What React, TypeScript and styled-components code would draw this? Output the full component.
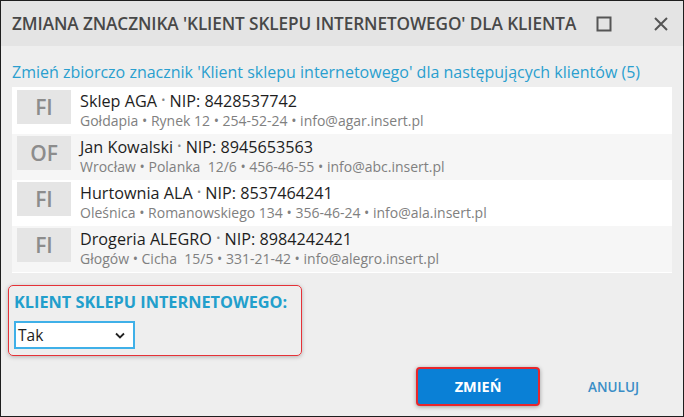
import React from "react";
import styled, { createGlobalStyle } from "styled-components";

const clients = [
  {
    badge: "FI",
    name: "Sklep AGA",
    nip: "8428537742",
    details: ["Gołdapia", "Rynek 12", "254-52-24", "info@agar.insert.pl"],
  },
  {
    badge: "OF",
    name: "Jan Kowalski",
    nip: "8945653563",
    details: ["Wrocław", "Polanka  12/6", "456-46-55", "info@abc.insert.pl"],
  },
  {
    badge: "FI",
    name: "Hurtownia ALA",
    nip: "8537464241",
    details: ["Oleśnica", "Romanowskiego 134", "356-46-24", "info@ala.insert.pl"],
  },
  {
    badge: "FI",
    name: "Drogeria ALEGRO",
    nip: "8984242421",
    details: ["Głogów", "Cicha  15/5", "331-21-42", "info@alegro.insert.pl"],
  },
];

const App = () => {
  return (
    <>
      <GlobalStyle />
      <Window>
        <TitleBar>
          <Title>ZMIANA ZNACZNIKA 'KLIENT SKLEPU INTERNETOWEGO' DLA KLIENTA</Title>
          <Controls>
            <svg width="16" height="16" viewBox="0 0 16 16">
              <rect x="1.5" y="1.5" width="13" height="13" fill="none" stroke="#555" strokeWidth="2" />
            </svg>
            <svg width="16" height="16" viewBox="0 0 16 16">
              <path d="M2 2L14 14M14 2L2 14" stroke="#555" strokeWidth="2" />
            </svg>
          </Controls>
        </TitleBar>
        <Body>
          <Subtitle>
            Zmień zbiorczo znacznik 'Klient sklepu internetowego' dla następujących klientów (5)
          </Subtitle>
          <List>
            {clients.map((c, i) => (
              <Row key={c.nip} $alt={i % 2 === 1}>
                <Badge>{c.badge}</Badge>
                <Info>
                  <Name>
                    {c.name} <Dot>•</Dot> NIP: {c.nip}
                  </Name>
                  <Details>{c.details.join(" • ")}</Details>
                </Info>
              </Row>
            ))}
          </List>
          <Group>
            <GroupLabel>KLIENT SKLEPU INTERNETOWEGO:</GroupLabel>
            <Select>
              <span>Tak</span>
              <svg width="10" height="7" viewBox="0 0 10 7">
                <path d="M1 1.5L5 5.5L9 1.5" fill="none" stroke="#222" strokeWidth="1.8" />
              </svg>
            </Select>
          </Group>
          <Footer>
            <PrimaryButton>ZMIEŃ</PrimaryButton>
            <LinkButton>ANULUJ</LinkButton>
          </Footer>
        </Body>
      </Window>
    </>
  );
};

const GlobalStyle = createGlobalStyle`
  body {
    margin: 0;
    font-family: "Open Sans", "Noto Sans", sans-serif;
  }
`;

const Window = styled.div`
  background: #eeeeee;
  border: 1px solid #1e1e1e;
  box-sizing: border-box;
  display: flex;
  flex-direction: column;
  height: 417px;
  overflow: hidden;
  width: 684px;
`;

const TitleBar = styled.div`
  align-items: center;
  background: #e4e4e4;
  display: flex;
  flex-shrink: 0;
  height: 45px;
  justify-content: space-between;
  padding: 0 14px 0 11px;
`;

const Title = styled.div`
  color: #484848;
  font-size: 17.2px;
  font-weight: 600;
  letter-spacing: -0.1px;
  white-space: nowrap;
`;

const Controls = styled.div`
  align-items: center;
  display: flex;
  gap: 41px;
`;

const Body = styled.div`
  display: flex;
  flex: 1;
  flex-direction: column;
  padding: 0 11px 0 11px;
`;

const Subtitle = styled.div`
  color: #2a9fcf;
  font-size: 16px;
  line-height: 20px;
  margin-top: 16px;
  white-space: nowrap;
`;

const List = styled.div`
  background: #ffffff;
  display: flex;
  flex-direction: column;
  margin-top: 5px;
  padding: 1px 0;
`;

const Row = styled.div<{ $alt: boolean }>`
  align-items: flex-start;
  background: ${(p) => (p.$alt ? "#f6f6f6" : "#ffffff")};
  display: flex;
  height: 46px;
  padding-top: 2px;
  box-sizing: border-box;
`;

const Badge = styled.div`
  align-items: center;
  background: #e5e5e5;
  color: #8c8c8c;
  display: flex;
  flex-shrink: 0;
  font-size: 21px;
  font-weight: 600;
  height: 34px;
  justify-content: center;
  margin: 0 9px 0 5px;
  width: 54px;
`;

const Info = styled.div`
  display: flex;
  flex-direction: column;
  margin-top: -1px;
`;

const Name = styled.div`
  color: #1e1e1e;
  font-size: 16.2px;
  line-height: 21px;
`;

const Dot = styled.span`
  color: #888;
  font-size: 11px;
  vertical-align: 3px;
`;

const Details = styled.div`
  color: #808080;
  font-size: 14px;
  line-height: 18px;
  white-space: pre;
`;

const Group = styled.div`
  border: 1.5px solid #e53238;
  border-radius: 5px;
  box-shadow: 0 1px 4px rgba(0, 0, 0, 0.25);
  box-sizing: border-box;
  height: 71px;
  margin: 12px 0 0 -4px;
  padding: 5px 0 0 5px;
  width: 294px;
`;

const GroupLabel = styled.div`
  color: #229fcc;
  font-size: 16.3px;
  font-weight: 700;
  line-height: 22px;
  white-space: nowrap;
`;

const Select = styled.div`
  align-items: center;
  background: #ffffff;
  border: 2px solid #3fb0e8;
  box-sizing: border-box;
  color: #222;
  display: flex;
  font-size: 15.5px;
  height: 28px;
  justify-content: space-between;
  margin-top: 8px;
  padding: 0 8px 0 2px;
  width: 121px;
`;

const Footer = styled.div`
  align-items: center;
  display: flex;
  gap: 48px;
  justify-content: flex-end;
  margin-top: 11px;
  padding-right: 33px;
`;

const PrimaryButton = styled.button`
  background: #0a80d6;
  border: 2px solid #e8262c;
  border-radius: 4px;
  box-shadow: 0 1px 4px rgba(0, 0, 0, 0.35);
  color: #ffffff;
  font-family: inherit;
  font-size: 14.5px;
  font-weight: 700;
  height: 39px;
  width: 124px;
`;

const LinkButton = styled.button`
  background: none;
  border: none;
  color: #3a8dc6;
  font-family: inherit;
  font-size: 13.5px;
  font-weight: 600;
  padding: 0;
`;

export default App;
